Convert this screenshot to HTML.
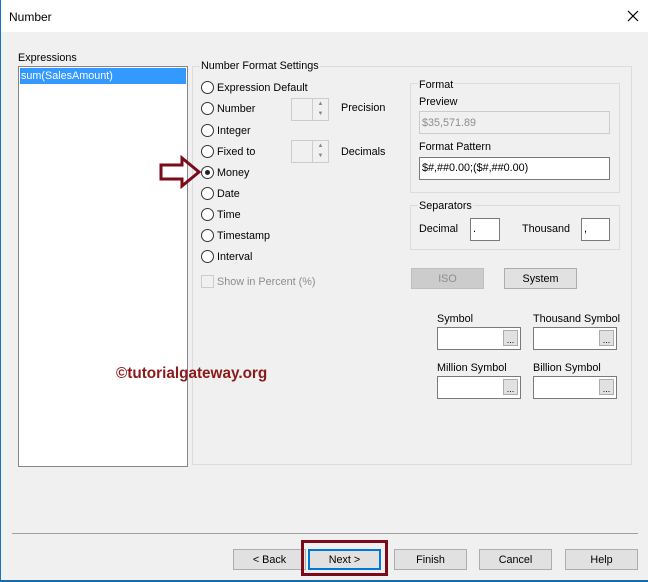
<!DOCTYPE html>
<html><head><style>
*{box-sizing:border-box;margin:0;padding:0}
body{width:648px;height:582px;background:#f0f0f0;font-family:"Liberation Sans",sans-serif;font-size:10.8px;color:#000;position:relative;overflow:hidden}
.a{position:absolute;white-space:nowrap}
.t{margin-top:1px}
.title{left:0;top:0;width:648px;height:32px;background:#fff}
.rad{position:absolute;width:13px;height:13px;border:1px solid #333;border-radius:50%;background:#fff}
.inp{position:absolute;background:#fff;border:1px solid #7a7a7a}
.grp{position:absolute;border:1px solid #dcdcdc}
.lbl{position:absolute;background:#f0f0f0;padding:0 1px;white-space:nowrap}
.btn{position:absolute;height:21px;border:1px solid #adadad;background:#e1e1e1;text-align:center;line-height:20px}
.dots{position:absolute;right:2px;top:2px;width:15px;height:16px;border:1px solid #adadad;background:#e1e1e1;font-size:9px;text-align:center;line-height:18px}
.spin{position:absolute;width:38px;height:23px;border:1px solid #ccc;background:#f0f0f0}
</style></head><body>
<div class="a title"></div>
<div class="a" style="left:0;top:0;width:1px;height:582px;background:#1a73c0"></div>
<div class="a" style="left:0;top:580px;width:648px;height:2px;background:#1a6aa8"></div>
<div class="a" style="left:9px;top:10px;font-size:12px">Number</div>
<svg class="a" style="left:627px;top:10px" width="12" height="12"><path d="M1 1L11 11M11 1L1 11" stroke="#000" stroke-width="1.2"/></svg>

<div class="a" style="left:18px;top:52px">Expressions</div>
<div class="inp" style="left:18px;top:66px;width:170px;height:401px;border-color:#828790"></div>
<div class="a" style="left:20px;top:68px;width:166px;height:16px;background:#3399ff;color:#fff;padding-left:1px;line-height:16px">sum(SalesAmount)</div>

<div class="grp" style="left:192px;top:66px;width:440px;height:399px"></div>
<div class="lbl" style="left:200px;top:60px">Number Format Settings</div>

<div class="rad" style="left:201px;top:81px"></div><div class="a" style="left:217px;top:82px">Expression Default</div>
<div class="rad" style="left:201px;top:102px"></div><div class="a" style="left:217px;top:103px">Number</div>
<div class="rad" style="left:201px;top:124px"></div><div class="a" style="left:217px;top:125px">Integer</div>
<div class="rad" style="left:201px;top:145px"></div><div class="a" style="left:217px;top:146px">Fixed to</div>
<div class="rad" style="left:201px;top:166px"><div style="position:absolute;left:3px;top:3px;width:5px;height:5px;border-radius:50%;background:#222"></div></div><div class="a" style="left:217px;top:167px">Money</div>
<div class="rad" style="left:201px;top:187px"></div><div class="a" style="left:217px;top:188px">Date</div>
<div class="rad" style="left:201px;top:208px"></div><div class="a" style="left:217px;top:209px">Time</div>
<div class="rad" style="left:201px;top:229px"></div><div class="a" style="left:217px;top:230px">Timestamp</div>
<div class="rad" style="left:201px;top:250px"></div><div class="a" style="left:217px;top:251px">Interval</div>
<div class="a" style="left:201px;top:275px;width:13px;height:13px;border:1px solid #ccc;background:#f0f0f0"></div>
<div class="a" style="left:217px;top:276px;color:#8d8d8d">Show in Percent (%)</div>

<div class="spin" style="left:291px;top:98px"><div style="position:absolute;left:20px;top:0;width:16px;height:21px;border-left:1px solid #ccc;font-size:6px;color:#888;text-align:center;line-height:10px">▲<br>▼</div></div>
<div class="spin" style="left:291px;top:140px"><div style="position:absolute;left:20px;top:0;width:16px;height:21px;border-left:1px solid #ccc;font-size:6px;color:#888;text-align:center;line-height:10px">▲<br>▼</div></div>
<div class="a" style="left:341px;top:102px">Precision</div>
<div class="a" style="left:341px;top:146px">Decimals</div>

<svg class="a" style="left:158px;top:155px" width="46" height="34"><path d="M3 10H24V3L41 17L24 31V24H3Z" fill="none" stroke="#7b0a1a" stroke-width="3"/></svg>

<div class="grp" style="left:410px;top:83px;width:210px;height:110px"></div>
<div class="lbl" style="left:418px;top:79px">Format</div>
<div class="a" style="left:419px;top:96px">Preview</div>
<div class="a" style="left:419px;top:111px;width:191px;height:23px;border:1px solid #ccc;background:#f0f0f0;color:#8d8d8d;padding:5px 2px">$35,571.89</div>
<div class="a" style="left:419px;top:141px">Format Pattern</div>
<div class="inp" style="left:419px;top:157px;width:191px;height:23px;padding:4px 2px">$#,##0.00;($#,##0.00)</div>

<div class="grp" style="left:410px;top:205px;width:210px;height:45px"></div>
<div class="lbl" style="left:418px;top:200px">Separators</div>
<div class="a" style="left:419px;top:223px">Decimal</div>
<div class="inp" style="left:470px;top:218px;width:30px;height:23px;padding:4px 2px">.</div>
<div class="a" style="left:522px;top:223px">Thousand</div>
<div class="inp" style="left:581px;top:218px;width:29px;height:23px;padding:4px 2px">,</div>

<div class="btn" style="left:411px;top:268px;width:73px;background:#ccc;border-color:#bfbfbf;color:#8d8d8d">ISO</div>
<div class="btn" style="left:504px;top:268px;width:73px">System</div>

<div class="a" style="left:437px;top:313px">Symbol</div>
<div class="a" style="left:533px;top:313px">Thousand Symbol</div>
<div class="inp" style="left:437px;top:327px;width:84px;height:23px"><div class="dots">...</div></div>
<div class="inp" style="left:533px;top:327px;width:84px;height:23px"><div class="dots">...</div></div>
<div class="a" style="left:437px;top:362px">Million Symbol</div>
<div class="a" style="left:533px;top:362px">Billion Symbol</div>
<div class="inp" style="left:437px;top:376px;width:84px;height:23px"><div class="dots">...</div></div>
<div class="inp" style="left:533px;top:376px;width:84px;height:23px"><div class="dots">...</div></div>

<div class="a" style="left:116px;top:365px;color:#8b1a1a;font-weight:bold;font-size:15.3px">©tutorialgateway.org</div>

<div class="a" style="left:12px;top:533px;width:626px;height:1px;background:#a0a0a0"></div>
<div class="btn" style="left:233px;top:549px;width:73px">&lt; Back</div>
<div class="btn" style="left:308px;top:549px;width:73px;border:2px solid #0078d7;line-height:18px">Next &gt;</div>
<div class="btn" style="left:394px;top:549px;width:73px">Finish</div>
<div class="btn" style="left:479px;top:549px;width:73px">Cancel</div>
<div class="btn" style="left:565px;top:549px;width:73px">Help</div>
<div class="a" style="left:301px;top:540px;width:87px;height:36px;border:3px solid #7b0a1a"></div>
</body></html>
